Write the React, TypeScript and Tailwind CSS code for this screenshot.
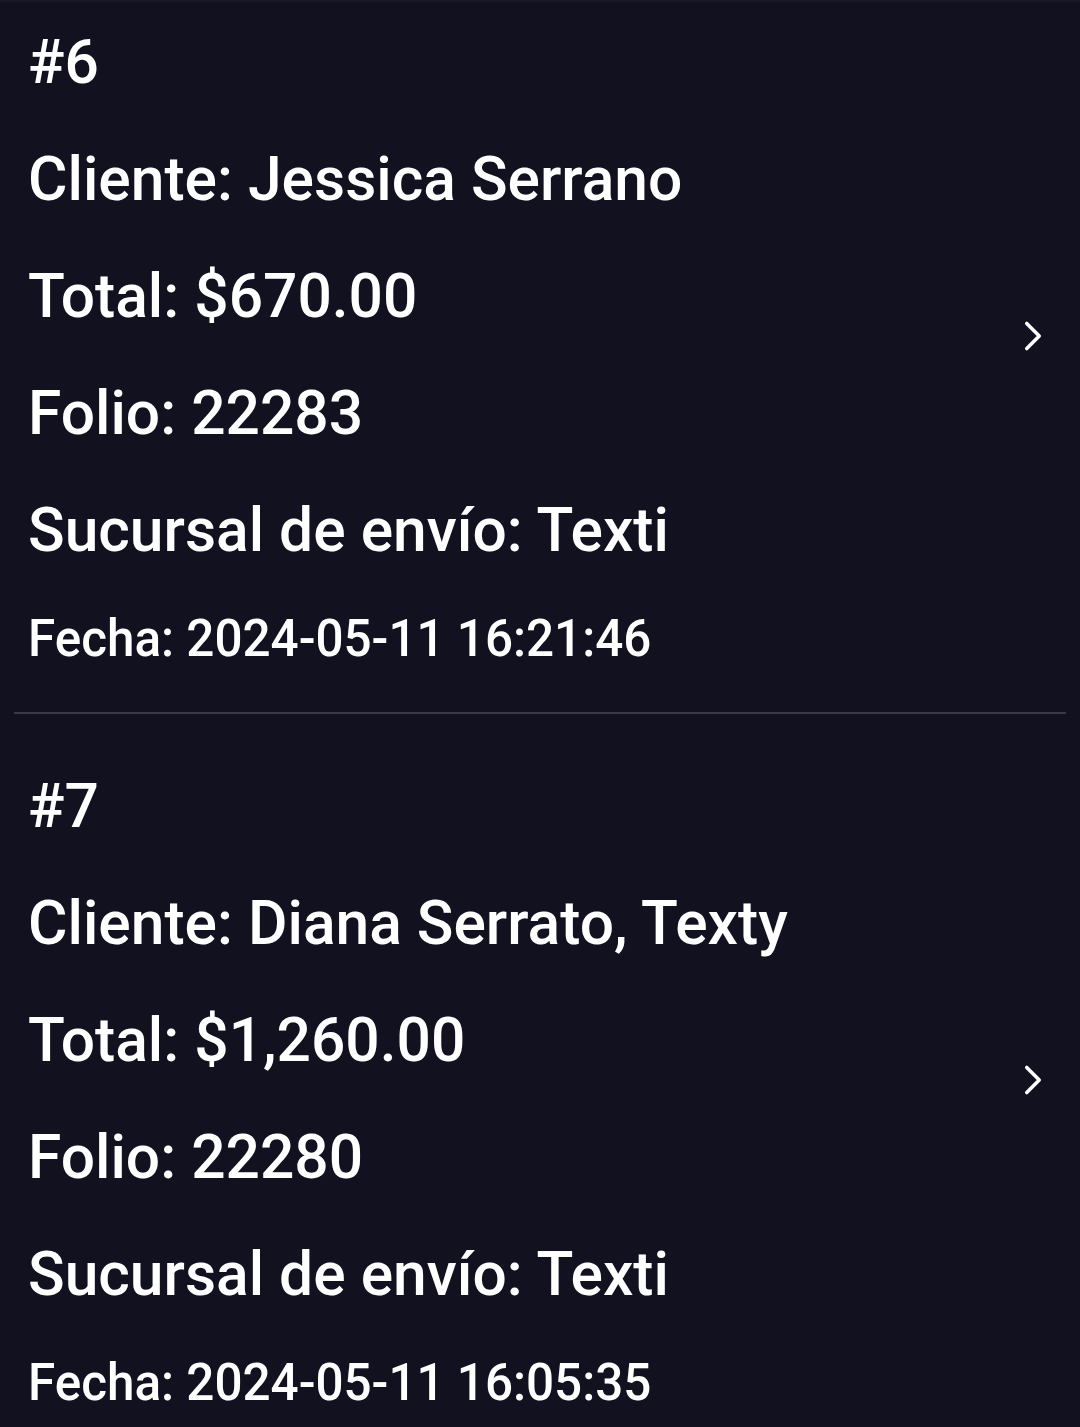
import { ChevronRight } from "lucide-react";

interface Order {
  num: number;
  cliente: string;
  total: string;
  folio: string;
  sucursal: string;
  fecha: string;
}

const orders: Order[] = [
  {
    num: 6,
    cliente: "Jessica Serrano",
    total: "$670.00",
    folio: "22283",
    sucursal: "Texti",
    fecha: "2024-05-11 16:21:46",
  },
  {
    num: 7,
    cliente: "Diana Serrato, Texty",
    total: "$1,260.00",
    folio: "22280",
    sucursal: "Texti",
    fecha: "2024-05-11 16:05:35",
  },
];

function OrderRow({ order }: { order: Order }) {
  return (
    <div className="flex items-center pl-[28px] pr-[22px]">
      <div className="flex-1 text-white font-medium">
        <div className="text-[60.5px] leading-[117px]">#{order.num}</div>
        <div className="text-[60.5px] leading-[117px]">Cliente: {order.cliente}</div>
        <div className="text-[60.5px] leading-[117px]">Total: {order.total}</div>
        <div className="text-[60.5px] leading-[117px]">Folio: {order.folio}</div>
        <div className="text-[60.5px] leading-[117px]">Sucursal de envío: {order.sucursal}</div>
        <div className="text-[52px] leading-[100px] whitespace-nowrap origin-left scale-x-[0.95]">
          Fecha: {order.fecha}
        </div>
      </div>
      <ChevronRight className="h-[50px] w-[50px] text-white mb-[22px]" strokeWidth={1.7} />
    </div>
  );
}

export default function App() {
  return (
    <div
      className="min-h-[1427px] w-full bg-[#12111f] border-t-2 border-[#191828] pt-[2px] overflow-hidden"
      style={{ fontFamily: "Roboto, 'Noto Sans', sans-serif" }}
    >
      <OrderRow order={orders[0]} />
      <div className="mx-[14px] mt-[23px] h-[2px] bg-[#3a3948]" />
      <div className="pt-[34px]">
        <OrderRow order={orders[1]} />
      </div>
    </div>
  );
}
